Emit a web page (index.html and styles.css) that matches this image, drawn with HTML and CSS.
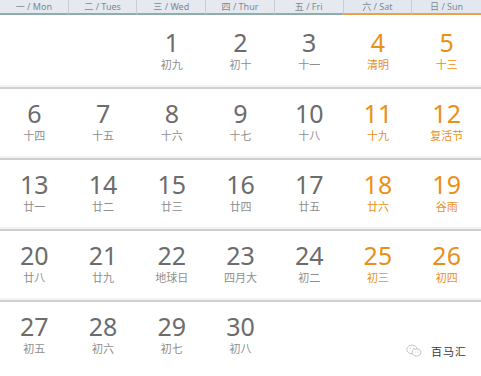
FILE: index.html
```html
<!DOCTYPE html>
<html lang="zh">
<head>
<meta charset="utf-8">
<link rel="stylesheet" href="styles.css">
</head>
<body>
<div class="cal">
  <div class="head">
    <div class="hd">一 / Mon</div>
    <div class="hd">二 / Tues</div>
    <div class="hd">三 / Wed</div>
    <div class="hd">四 / Thur</div>
    <div class="hd">五 / Fri</div>
    <div class="hd we">六 / Sat</div>
    <div class="hd we last">日 / Sun</div>
  </div>
  <div class="row first">
    <div class="cell"></div>
    <div class="cell"></div>
    <div class="cell"><span class="n">1</span><span class="l">初九</span></div>
    <div class="cell"><span class="n">2</span><span class="l">初十</span></div>
    <div class="cell"><span class="n">3</span><span class="l">十一</span></div>
    <div class="cell we"><span class="n">4</span><span class="l">清明</span></div>
    <div class="cell we"><span class="n">5</span><span class="l">十三</span></div>
  </div>
  <div class="row">
    <div class="cell"><span class="n">6</span><span class="l">十四</span></div>
    <div class="cell"><span class="n">7</span><span class="l">十五</span></div>
    <div class="cell"><span class="n">8</span><span class="l">十六</span></div>
    <div class="cell"><span class="n">9</span><span class="l">十七</span></div>
    <div class="cell"><span class="n">10</span><span class="l">十八</span></div>
    <div class="cell we"><span class="n">11</span><span class="l">十九</span></div>
    <div class="cell we"><span class="n">12</span><span class="l">复活节</span></div>
  </div>
  <div class="row">
    <div class="cell"><span class="n">13</span><span class="l">廿一</span></div>
    <div class="cell"><span class="n">14</span><span class="l">廿二</span></div>
    <div class="cell"><span class="n">15</span><span class="l">廿三</span></div>
    <div class="cell"><span class="n">16</span><span class="l">廿四</span></div>
    <div class="cell"><span class="n">17</span><span class="l">廿五</span></div>
    <div class="cell we"><span class="n">18</span><span class="l">廿六</span></div>
    <div class="cell we"><span class="n">19</span><span class="l">谷雨</span></div>
  </div>
  <div class="row">
    <div class="cell"><span class="n">20</span><span class="l">廿八</span></div>
    <div class="cell"><span class="n">21</span><span class="l">廿九</span></div>
    <div class="cell"><span class="n">22</span><span class="l">地球日</span></div>
    <div class="cell"><span class="n">23</span><span class="l">四月大</span></div>
    <div class="cell"><span class="n">24</span><span class="l">初二</span></div>
    <div class="cell we"><span class="n">25</span><span class="l">初三</span></div>
    <div class="cell we"><span class="n">26</span><span class="l">初四</span></div>
  </div>
  <div class="row last">
    <div class="cell"><span class="n">27</span><span class="l">初五</span></div>
    <div class="cell"><span class="n">28</span><span class="l">初六</span></div>
    <div class="cell"><span class="n">29</span><span class="l">初七</span></div>
    <div class="cell"><span class="n">30</span><span class="l">初八</span></div>
    <div class="cell"></div>
    <div class="cell"></div>
    <div class="cell mark">
      <svg class="wx" width="16" height="14" viewBox="0 0 16 14">
        <ellipse cx="6" cy="5.5" rx="5.2" ry="4.3" fill="none" stroke="#c4c4c4" stroke-width="1"/>
        <ellipse cx="10.5" cy="8.5" rx="4.3" ry="3.5" fill="#fff" stroke="#c4c4c4" stroke-width="1"/>
        <circle cx="4.2" cy="4.5" r="0.7" fill="#c4c4c4"/>
        <circle cx="7.8" cy="4.5" r="0.7" fill="#c4c4c4"/>
        <circle cx="9.2" cy="8" r="0.6" fill="#c4c4c4"/>
        <circle cx="11.8" cy="8" r="0.6" fill="#c4c4c4"/>
      </svg>
      <span class="mt">百马汇</span>
    </div>
  </div>
</div>
</body>
</html>
```
FILE: styles.css
```css
html, body {
  margin: 0;
  padding: 0;
  background: #ffffff;
}
.cal {
  width: 481px;
  font-family: "Noto Sans", "Noto Sans CJK SC", sans-serif;
}
.head {
  display: grid;
  grid-template-columns: repeat(7, 1fr);
  background: #e6e9ef;
}
.hd {
  height: 13px;
  border-bottom: 2px solid #8eaeaa;
  border-right: 1px solid #c9ced6;
  font-family: "Noto Sans", "Noto Sans CJK SC", sans-serif;
  font-size: 9px;
  line-height: 13px;
  color: #7b8a92;
  text-align: center;
}
.hd.we {
  border-bottom-color: #e7a24e;
  background: #e3e8f0;
}
.hd.last {
  border-right: none;
}
.row {
  display: grid;
  grid-template-columns: repeat(7, 1fr);
  height: 71px;
  box-sizing: border-box;
  border-bottom: 2px solid #cfcfcf;
  box-shadow: inset 0 -2px 0 #f3f3f3;
}
.row.first {
  margin-top: 3px;
}
.row.last {
  border-bottom: none;
  box-shadow: none;
}
.cell {
  display: flex;
  flex-direction: column;
  align-items: center;
  padding-top: 11px;
  color: #6c6c6c;
  min-width: 0;
}
.n {
  font-size: 25px;
  line-height: 26px;
}
.l {
  margin-top: 2px;
  font-family: "Noto Sans CJK SC", sans-serif;
  font-size: 11px;
  line-height: 15px;
  color: #8e8e8e;
}
.cell.we .n,
.cell.we .l {
  color: #ea9018;
}
.cell.mark {
  flex-direction: row;
  align-items: flex-end;
  justify-content: flex-end;
  padding: 0 14px 15px 0;
  gap: 9px;
  white-space: nowrap;
}
.wx {
  display: block;
  flex-shrink: 0;
}
.mt {
  flex-shrink: 0;
  font-family: "Noto Sans CJK SC", sans-serif;
  font-size: 11px;
  line-height: 14px;
  color: #3a3a3a;
  letter-spacing: 1px;
}
```
